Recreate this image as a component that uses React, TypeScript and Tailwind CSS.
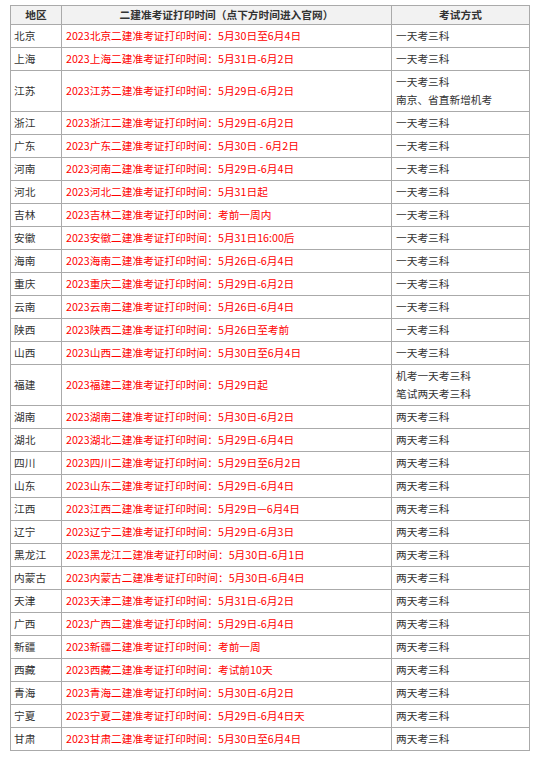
import React from "react";

type Row = { region: string; time: string; mode: string[] };

const rows: Row[] = [
  { region: "北京", time: "2023北京二建准考证打印时间：5月30日至6月4日", mode: ["一天考三科"] },
  { region: "上海", time: "2023上海二建准考证打印时间：5月31日-6月2日", mode: ["一天考三科"] },
  { region: "江苏", time: "2023江苏二建准考证打印时间：5月29日-6月2日", mode: ["一天考三科", "南京、省直新增机考"] },
  { region: "浙江", time: "2023浙江二建准考证打印时间：5月29日-6月2日", mode: ["一天考三科"] },
  { region: "广东", time: "2023广东二建准考证打印时间：5月30日 - 6月2日", mode: ["一天考三科"] },
  { region: "河南", time: "2023河南二建准考证打印时间：5月29日-6月4日", mode: ["一天考三科"] },
  { region: "河北", time: "2023河北二建准考证打印时间：5月31日起", mode: ["一天考三科"] },
  { region: "吉林", time: "2023吉林二建准考证打印时间：考前一周内", mode: ["一天考三科"] },
  { region: "安徽", time: "2023安徽二建准考证打印时间：5月31日16:00后", mode: ["一天考三科"] },
  { region: "海南", time: "2023海南二建准考证打印时间：5月26日-6月4日", mode: ["一天考三科"] },
  { region: "重庆", time: "2023重庆二建准考证打印时间：5月29日-6月2日", mode: ["一天考三科"] },
  { region: "云南", time: "2023云南二建准考证打印时间：5月26日-6月4日", mode: ["一天考三科"] },
  { region: "陕西", time: "2023陕西二建准考证打印时间：5月26日至考前", mode: ["一天考三科"] },
  { region: "山西", time: "2023山西二建准考证打印时间：5月30日至6月4日", mode: ["一天考三科"] },
  { region: "福建", time: "2023福建二建准考证打印时间：5月29日起", mode: ["机考一天考三科", "笔试两天考三科"] },
  { region: "湖南", time: "2023湖南二建准考证打印时间：5月30日-6月2日", mode: ["两天考三科"] },
  { region: "湖北", time: "2023湖北二建准考证打印时间：5月29日-6月4日", mode: ["两天考三科"] },
  { region: "四川", time: "2023四川二建准考证打印时间：5月29日至6月2日", mode: ["两天考三科"] },
  { region: "山东", time: "2023山东二建准考证打印时间：5月29日-6月4日", mode: ["两天考三科"] },
  { region: "江西", time: "2023江西二建准考证打印时间：5月29日—6月4日", mode: ["两天考三科"] },
  { region: "辽宁", time: "2023辽宁二建准考证打印时间：5月29日-6月3日", mode: ["两天考三科"] },
  { region: "黑龙江", time: "2023黑龙江二建准考证打印时间：5月30日-6月1日", mode: ["两天考三科"] },
  { region: "内蒙古", time: "2023内蒙古二建准考证打印时间：5月30日-6月4日", mode: ["两天考三科"] },
  { region: "天津", time: "2023天津二建准考证打印时间：5月31日-6月2日", mode: ["两天考三科"] },
  { region: "广西", time: "2023广西二建准考证打印时间：5月29日-6月4日", mode: ["两天考三科"] },
  { region: "新疆", time: "2023新疆二建准考证打印时间：考前一周", mode: ["两天考三科"] },
  { region: "西藏", time: "2023西藏二建准考证打印时间：考试前10天", mode: ["两天考三科"] },
  { region: "青海", time: "2023青海二建准考证打印时间：5月30日-6月2日", mode: ["两天考三科"] },
  { region: "宁夏", time: "2023宁夏二建准考证打印时间：5月29日-6月4日天", mode: ["两天考三科"] },
  { region: "甘肃", time: "2023甘肃二建准考证打印时间：5月30日至6月4日", mode: ["两天考三科"] },
];

export default function App() {
  return (
    <div
      className="bg-white min-h-[758px] pt-[5px] pl-[10px]"
      style={{ fontFamily: '"Noto Sans CJK SC", "Noto Sans", sans-serif' }}
    >
      <table className="w-[519px] table-fixed border-collapse text-[10.7px] leading-[18px] text-[#333333]">
        <colgroup>
          <col className="w-[51px]" />
          <col className="w-[330px]" />
          <col className="w-[138px]" />
        </colgroup>
        <thead>
          <tr className="bg-[#f2f2f2]">
            <th className="border border-[#aaaaaa] py-0 px-[3px] text-center font-bold">地区</th>
            <th className="border border-[#aaaaaa] py-0 px-[3px] text-center font-bold">
              二建准考证打印时间（点下方时间进入官网）
            </th>
            <th className="border border-[#aaaaaa] py-0 px-[3px] text-center font-bold">考试方式</th>
          </tr>
        </thead>
        <tbody>
          {rows.map((r) => (
            <tr key={r.region}>
              <td className="border border-[#aaaaaa] py-[2px] pl-[3px] pr-0 align-middle whitespace-nowrap">
                {r.region}
              </td>
              <td className="border border-[#aaaaaa] py-[2px] pl-[4px] pr-[3px] align-middle text-[#ff0000] whitespace-nowrap">
                {r.time}
              </td>
              <td className="border border-[#aaaaaa] py-[2px] pl-[4px] pr-[3px] align-middle">
                {r.mode.map((m) => (
                  <div key={m}>{m}</div>
                ))}
              </td>
            </tr>
          ))}
        </tbody>
      </table>
    </div>
  );
}
